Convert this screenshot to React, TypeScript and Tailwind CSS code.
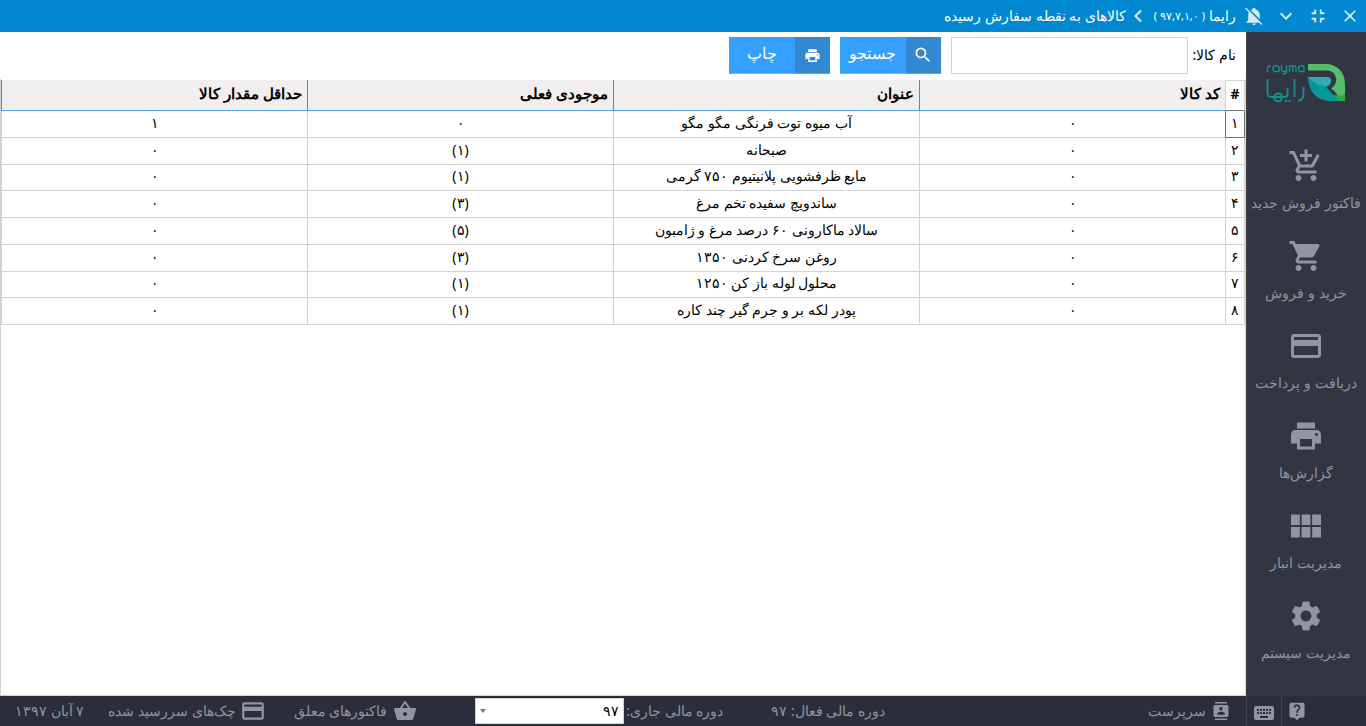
import type { ReactNode } from "react";
import {
  MdAddShoppingCart,
  MdShoppingCart,
  MdPayment,
  MdPrint,
  MdSettings,
  MdKeyboard,
  MdLiveHelp,
  MdContacts,
  MdShoppingBasket,
  MdSearch,
  MdClose,
  MdFullscreenExit,
  MdKeyboardArrowDown,
} from "react-icons/md";

function ModuleIcon() {
  return (
    <svg viewBox="4 5 17 13" className="my-[6px] h-[24px] w-[30px]" fill="currentColor" aria-hidden="true">
      <path d="M4 11h5V5H4v6zm0 7h5v-6H4v6zm6 0h5v-6h-5v6zm6 0h5v-6h-5v6zm-6-7h5V5h-5v6zm6-6v6h5V5h-5z" />
    </svg>
  );
}

function BellOffIcon() {
  return (
    <svg viewBox="0 0 24 24" className="size-5" fill="currentColor" aria-hidden="true">
      <path d="M20.840 22.730L18.110 20H3V19L5 17V11C5 9.860 5.290 8.730 5.830 7.720L1.110 3L2.390 1.730L22.110 21.460L20.840 22.730M19 15.800V11C19 7.900 16.970 5.170 14 4.290C14 4.190 14 4.100 14 4A2 2 0 0 0 12 2A2 2 0 0 0 10 4C10 4.100 10 4.190 10 4.290C9.390 4.470 8.800 4.740 8.260 5.090L19 15.800M12 23A2 2 0 0 0 14 21H10A2 2 0 0 0 12 23Z" />
    </svg>
  );
}

const navItems: { label: string; icon: ReactNode }[] = [
  { label: "فاکتور فروش جدید", icon: <MdAddShoppingCart size={36} /> },
  { label: "خرید و فروش", icon: <MdShoppingCart size={36} /> },
  { label: "دریافت و پرداخت", icon: <MdPayment size={36} /> },
  { label: "گزارش‌ها", icon: <MdPrint size={36} /> },
  { label: "مدیریت انبار", icon: <ModuleIcon /> },
  { label: "مدیریت سیستم", icon: <MdSettings size={36} /> },
];

const columns = ["کد کالا", "عنوان", "موجودی فعلی", "حداقل مقدار کالا"];

const rows = [
  ["۰", "آب میوه توت فرنگی مگو مگو", "۰", "۱"],
  ["۰", "صبحانه", "(۱)", "۰"],
  ["۰", "مایع ظرفشویی پلانیتیوم ۷۵۰ گرمی", "(۱)", "۰"],
  ["۰", "ساندویچ سفیده تخم مرغ", "(۳)", "۰"],
  ["۰", "سالاد ماکارونی ۶۰ درصد مرغ و ژامبون", "(۵)", "۰"],
  ["۰", "روغن سرخ کردنی ۱۳۵۰", "(۳)", "۰"],
  ["۰", "محلول لوله باز کن ۱۲۵۰", "(۱)", "۰"],
  ["۰", "پودر لکه بر و جرم گیر چند کاره", "(۱)", "۰"],
];

const rowNumbers = ["۱", "۲", "۳", "۴", "۵", "۶", "۷", "۸"];

function Logo() {
  return (
    <svg viewBox="0 0 80 40" className="h-10 w-20" fill="none" role="img" aria-label="rayma رایما">
      <g stroke="#168f91" strokeWidth="1.4" strokeLinecap="round" strokeLinejoin="round">
        <path d="M1.500 7.500V4Q1.500 1.800 4.500 1.800" />
        <path d="M13 7.500V4Q13 1.800 10.500 1.800H9.500Q7 1.800 7 4.600Q7 7.500 9.500 7.500H13" />
        <path d="M15.500 1.800V4.800Q15.500 7.500 18 7.500H20.500M20.500 1.800V8Q20.500 10 17 10" />
        <path d="M23.500 7.500V1.800H28Q30 1.800 30 4V7.500M26.800 1.800V7.500" />
        <path d="M38 7.500V4Q38 1.800 35.500 1.800H34.800Q32.500 1.800 32.500 4.600Q32.500 7.500 35 7.500H38" />
      </g>
      <g stroke="#168f91" strokeWidth="1.800" strokeLinejoin="round">
        <path d="M1.500 15V29Q1.500 33 5 33H19Q21.500 33 21.500 30V24" />
        <path d="M8 33Q8 37.500 12 37.500Q16 37.500 16 33Q16 29.500 12 29.500Q9.500 29.500 8 33" />
        <path d="M28.500 15V33M37.500 23V30Q37.500 36.500 32 36.500" />
        <path d="M19 37h2M22.500 37h2" />
      </g>
      <path d="M42 0H60C71 0 79 8 79 20V37H73Q72 29 65 24.500Q73 19 69 11Q67 6.500 60 6.500H42Z" fill="#58bd6b" />
      <path d="M65 30Q73 33 79 30V37H71Z" fill="#2dac4a" />
      <path d="M42 13H61Q65 13 65 17Q65 22 60 23L73 37H63Q43 35 42 13Z" fill="#05979a" />
      <path d="M42 13H61Q65 13 65 17Q65 21 60 22Q50 22 42 13Z" fill="#35a9ae" />
    </svg>
  );
}

function ActionButton({ label, icon }: { label: string; icon: ReactNode }) {
  return (
    <button type="button" className="flex h-[37px] text-base text-white">
      <span className="flex h-full w-[35px] items-center justify-center border-b border-[#5da9e6] bg-[#3488d2]">{icon}</span>
      <span className="flex h-full w-[66px] items-center justify-center border-b border-[#5db2fb] bg-[#35a0ff] pb-1">{label}</span>
    </button>
  );
}

export default function App() {
  return (
    <div dir="rtl" className="flex h-screen flex-col overflow-hidden bg-white font-['Noto_Sans',sans-serif] text-sm text-black">
      <header className="flex h-8 shrink-0 items-center bg-[#0288d1] text-white">
        <div className="flex items-center text-[#d3ebf8]">
          <button type="button" aria-label="بستن" className="flex w-8 justify-center"><MdClose size={20} /></button>
          <button type="button" aria-label="خروج از تمام صفحه" className="flex w-8 justify-center"><MdFullscreenExit size={22} /></button>
          <button type="button" aria-label="کوچک کردن" className="flex w-8 justify-center"><MdKeyboardArrowDown size={24} /></button>
          <button type="button" aria-label="اعلان‌ها" className="flex w-8 justify-center"><BellOffIcon /></button>
        </div>
        <h1 className="flex items-center whitespace-nowrap pr-0.5">
          <span>رایما</span>
          <span className="px-1 text-[11px]">( ۹۷,۷,۱,۰ )</span>
          <svg viewBox="0 0 20 20" className="mx-0.5 size-5" fill="none" stroke="#d3ebf8" strokeWidth="2.200"><path d="M13 4.500 7.500 10l5.500 5.500" /></svg>
          <span>کالاهای به نقطه سفارش رسیده</span>
        </h1>
      </header>

      <div className="flex min-h-0 flex-1">
        <aside className="flex w-[120px] shrink-0 flex-col bg-[#323642] text-[#8f95a1] shadow-[inset_1px_0_0_#444447]">
          <div className="flex h-[104px] items-center justify-center"><Logo /></div>
          <nav className="flex flex-col">
            {navItems.map(({ label, icon }) => (
              <a key={label} href="#" className="flex h-[90px] flex-col items-center gap-2 whitespace-nowrap pt-3">
                {icon}
                <span className="leading-[22px]">{label}</span>
              </a>
            ))}
          </nav>
        </aside>

        <main className="flex min-w-0 flex-1 flex-col">
          <form className="flex h-[47px] shrink-0 items-center gap-2.5 pr-2.5" onSubmit={(e) => e.preventDefault()}>
            <div className="flex items-center gap-[5px]">
              <label htmlFor="product-name" className="pb-0.5">نام کالا:</label>
              <input id="product-name" type="text" className="h-[37px] w-[237px] border border-[#d3d3d3] bg-white px-2 outline-none" />
            </div>
            <ActionButton label="جستجو" icon={<MdSearch size={20} />} />
            <ActionButton label="چاپ" icon={<MdPrint size={17} />} />
          </form>
          <div className="min-h-0 flex-1 border-x border-b border-[#d0d3d6] pt-px">
            <table className="h-[245px] w-full table-fixed border-separate border-spacing-0">
              <thead>
                <tr className="h-[31px]">
                  <th className="w-5 border border-[#d3d3d3] border-b-[#707070] p-0 pb-1">#</th>
                  {columns.map((c) => (
                    <th key={c} className="border-b border-l border-b-[#4db0e0] border-l-[#2a9bd0] bg-[#f0eeef] p-0 pb-1 pr-[5px] text-right text-[15px] leading-5">{c}</th>
                  ))}
                </tr>
              </thead>
              <tbody>
                {rows.map((row, i) => (
                  <tr key={i}>
                    <td className={i === 0 ? "border-x border-b border-[#707070] p-0 pb-0.5 text-center leading-5" : "border-x border-b border-[#d3d3d3] p-0 pb-0.5 text-center leading-5"}>{rowNumbers[i]}</td>
                    {row.map((cell, j) => (
                      <td key={j} className="border-b border-l border-[#d3d3d3] p-0 pb-0.5 text-center leading-5">{cell}</td>
                    ))}
                  </tr>
                ))}
              </tbody>
            </table>
          </div>
        </main>
      </div>

      <footer className="flex h-[30px] shrink-0 items-center whitespace-nowrap bg-[#2b2e3a] text-[#8f95a1]">
        <div className="flex h-full w-[120px] shrink-0 border-l border-[#444447]">
          <button type="button" aria-label="راهنما" className="flex w-[85px] items-center justify-end border-l border-[#444447] pl-[5px]"><MdLiveHelp size={20} /></button>
          <button type="button" aria-label="صفحه کلید" className="flex flex-1 items-center justify-center pt-1"><MdKeyboard size={24} /></button>
        </div>
        <div className="flex flex-1 items-center">
          <div className="flex items-center gap-1.5 pr-4"><MdContacts size={18} /><span>سرپرست</span></div>
          <div className="mr-auto">دوره مالی فعال: ۹۷</div>
          <div className="mr-12 flex items-center gap-0.5">
            <label htmlFor="period">دوره مالی جاری:</label>
            <span className="relative flex">
              <select id="period" className="h-[26px] w-[149px] appearance-none border border-[#d3d3d3] bg-white px-1 leading-5 text-black"><option>۹۷</option></select>
              <svg viewBox="0 0 6 4" className="pointer-events-none absolute left-[5px] top-[11px] h-1 w-1.5" fill="#777"><path d="M0 0h6L3 4z" /></svg>
            </span>
          </div>
          <a href="#" className="mr-[58px] flex items-center gap-1.5"><MdShoppingBasket size={24} /><span>فاکتورهای معلق</span></a>
          <a href="#" className="mr-7 flex items-center gap-1"><MdPayment size={26} /><span>چک‌های سررسید شده</span></a>
          <div className="mr-6 pl-[15px]">۷ آبان ۱۳۹۷</div>
        </div>
      </footer>
    </div>
  );
}
